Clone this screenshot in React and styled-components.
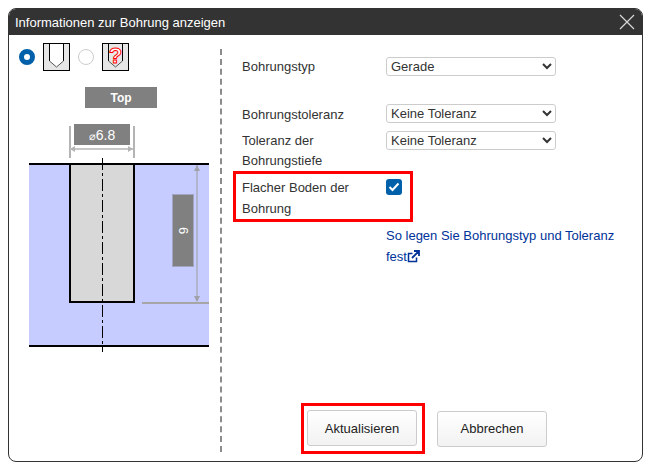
import React from "react";
import styled, { createGlobalStyle } from "styled-components";

const GlobalStyle = createGlobalStyle`
  html, body {
    margin: 0;
    padding: 0;
    background: #fff;
  }
  body {
    font-family: "Liberation Sans", Arial, sans-serif;
    color: #333;
  }
`;

const Page = styled.div`
  width: 652px;
  height: 469px;
  padding: 8px 8px 7px 8px;
  box-sizing: border-box;
`;

const Dialog = styled.div`
  width: 635px;
  height: 454px;
  box-sizing: border-box;
  display: flex;
  flex-direction: column;
  border: 1px solid #333;
  border-radius: 8px;
  overflow: hidden;
  background: #fff;
`;

const TitleBar = styled.div`
  height: 26px;
  flex: none;
  display: flex;
  align-items: center;
  justify-content: space-between;
  padding: 0 7px 0 6px;
  background: #333;
  color: #fff;
  font-size: 13px;
`;

const CloseIcon = styled.svg`
  width: 16px;
  height: 16px;
  display: block;
`;

const Body = styled.div`
  flex: 1;
  display: flex;
  padding: 14px 0 7px 0;
  min-height: 0;
`;

const LeftPane = styled.div`
  width: 213px;
  flex: none;
  box-sizing: border-box;
  margin-bottom: 2px;
  border-right: 2px dashed #8c8c8c;
  display: flex;
  flex-direction: column;
`;

const HoleTypes = styled.div`
  display: flex;
  align-items: center;
  padding-left: 10px;
  margin-top: -6px;
  height: 28px;
`;

const Radio = styled.span`
  width: 16px;
  height: 16px;
  box-sizing: border-box;
  border-radius: 50%;
  background: #fff;
  border: ${(p) => (p.$checked ? "5px solid #0060aa" : "1px solid #ccc")};
  margin-right: 8px;
`;

const TypeIcon = styled.svg`
  width: 27px;
  height: 28px;
  display: block;
  margin-right: 8px;
`;

const Drawing = styled.svg`
  width: 211px;
  height: 320px;
  display: block;
  margin-top: 6px;
`;

const RightPane = styled.div`
  flex: 1;
  display: flex;
  flex-direction: column;
  padding-left: 20px;
  font-size: 13px;
  line-height: 20px;
`;

const FormRow = styled.div`
  display: grid;
  grid-template-columns: 144px 170px;
  margin-top: ${(p) => p.$top || 0}px;
`;

const Label = styled.div`
  padding-top: ${(p) => p.$pad || 0}px;
`;

const Select = styled.select`
  width: 170px;
  height: 19px;
  box-sizing: border-box;
  padding: 0;
  font-family: "Liberation Sans", Arial, sans-serif;
  font-size: 13px;
  color: #333;
  background: #fff;
  border: 1px solid #ccc;
  border-radius: 3px;
`;

const FlatBottomRow = styled.div`
  display: grid;
  grid-template-columns: 144px 170px;
  width: 180px;
  height: 51px;
  box-sizing: border-box;
  margin: 0 0 0 -9px;
  padding: 3px 0 0 6px;
  border: 3px solid #f00;
  line-height: 21px;
`;

const Checkbox = styled.span`
  width: 16px;
  height: 16px;
  margin-top: 2px;
  border-radius: 3px;
  background: #0060aa;
  display: flex;
  align-items: center;
  justify-content: center;
`;

const HelpLink = styled.a`
  display: block;
  width: 240px;
  margin: 3px 0 0 144px;
  color: #003399;
  line-height: 21px;
  text-decoration: none;
  svg {
    vertical-align: -2px;
  }
`;

const Footer = styled.div`
  margin-top: auto;
  display: flex;
  align-items: center;
  padding-left: 59px;
`;

const PrimaryHighlight = styled.div`
  padding: 4px 5px 5px 3px;
  border: 3px solid #f00;
  display: flex;
`;

const Button = styled.button`
  width: 110px;
  height: 36px;
  box-sizing: border-box;
  font-family: "Liberation Sans", Arial, sans-serif;
  font-size: 13px;
  color: #222;
  background: linear-gradient(#fff, #f2f2f2);
  border: 1px solid #ccc;
  border-radius: 3px;
  margin-left: ${(p) => p.$left || 0}px;
`;

const HoleIcon = ({ unknown }) => (
  <TypeIcon viewBox="0 0 27 28">
    <rect x="0.500" y="0.500" width="26" height="27" fill="#e6e6e6" stroke="#000" />
    <path d="M6.500 1v17l7 6 7-6V1z" fill={unknown ? "#e6e6e6" : "#fff"} stroke="none" />
    <path d="M6.500 1v17M20.500 1v17" stroke="#000" strokeWidth="1" fill="none" />
    <path d="M6.500 18l7 6 7-6" stroke="#555" strokeWidth="1" fill="none" />
    {unknown && (
      <text
        x="13.500"
        y="20"
        textAnchor="middle"
        fontFamily="Liberation Sans, Arial, sans-serif"
        fontSize="22"
        fontWeight="700"
        fill="#fff"
        stroke="#f00"
        strokeWidth="1"
      >
        ?
      </text>
    )}
  </TypeIcon>
);

// left pane drawing, origin is at page x=9, y=77
const HoleDrawing = () => (
  <Drawing viewBox="0 0 211 320">
    <rect x="20" y="87" width="180" height="182" fill="#c6ccff" />
    <rect x="76" y="10" width="72" height="21" fill="#808080" />
    <text x="112" y="25" textAnchor="middle" fontSize="12" fontWeight="700" fontFamily="Liberation Sans, Arial, sans-serif" fill="#fff">
      Top
    </text>

    <path d="M61 49v32M125 49v32" stroke="#b4b4b4" strokeWidth="2" />
    <path d="M61 72h63" stroke="#c8c8c8" strokeWidth="2" />
    <path d="M61 72l5-3v6zM124 72l-5-3v6z" fill="#b4b4b4" />
    <rect x="65" y="47" width="56" height="21" fill="#808080" />
    <text x="93" y="63" textAnchor="middle" fontFamily="Liberation Sans, Arial, sans-serif" fill="#fff">
      <tspan fontSize="11">⌀</tspan>
      <tspan fontSize="14">6.8</tspan>
    </text>

    <rect x="61" y="87" width="64" height="138" fill="#d8d8d8" stroke="#000" strokeWidth="2" />
    <path d="M20 87h180M20 269h180" stroke="#000" strokeWidth="2" />
    <path d="M93.500 81v194" stroke="#000" strokeWidth="1" strokeDasharray="12 3 3 3" />

    <path d="M188 88v136" stroke="#b0b4cc" strokeWidth="2" />
    <path d="M188 88l-3 6h6zM188 225l-3-6h6z" fill="#a0a0a8" />
    <path d="M133 226h67" stroke="#a6a6a6" strokeWidth="2" />
    <rect x="163.500" y="117.500" width="21" height="72" fill="#808080" stroke="#a0a4c0" />
    <text
      x="174"
      y="153.500"
      textAnchor="middle"
      fontSize="13"
      fontFamily="Liberation Sans, Arial, sans-serif"
      fill="#fff"
      transform="rotate(90 174 153.500)"
      dy="4"
    >
      6
    </text>
  </Drawing>
);

export default function App() {
  return (
    <Page>
      <GlobalStyle />
      <Dialog>
        <TitleBar>
          <span>Informationen zur Bohrung anzeigen</span>
          <CloseIcon viewBox="0 0 16 16">
            <path d="M1 1l14 14M15 1L1 15" stroke="#d8d8d8" strokeWidth="1.200" />
          </CloseIcon>
        </TitleBar>
        <Body>
          <LeftPane>
            <HoleTypes>
              <Radio $checked />
              <HoleIcon />
              <Radio />
              <HoleIcon unknown />
            </HoleTypes>
            <HoleDrawing />
          </LeftPane>
          <RightPane>
            <FormRow $top={8}>
              <Label>Bohrungstyp</Label>
              <Select defaultValue="Gerade">
                <option>Gerade</option>
              </Select>
            </FormRow>
            <FormRow $top={27}>
              <Label $pad={1}>Bohrungstoleranz</Label>
              <Select defaultValue="Keine Toleranz">
                <option>Keine Toleranz</option>
              </Select>
            </FormRow>
            <FormRow $top={6}>
              <Label>
                Toleranz der
                <br />
                Bohrungstiefe
              </Label>
              <Select defaultValue="Keine Toleranz">
                <option>Keine Toleranz</option>
              </Select>
            </FormRow>
            <FlatBottomRow>
              <Label>
                Flacher Boden der
                <br />
                Bohrung
              </Label>
              <Checkbox>
                <svg width="12" height="10" viewBox="0 0 12 10">
                  <path d="M1.500 5l3 3 6-6.500" stroke="#fff" strokeWidth="2" fill="none" />
                </svg>
              </Checkbox>
            </FlatBottomRow>
            <HelpLink href="#">
              So legen Sie Bohrungstyp und Toleranz fest
              <svg width="13" height="13" viewBox="0 0 13 13">
                <path d="M9.500 7.500V11.500H1.500V3.500H5.500" stroke="#003399" strokeWidth="1.500" fill="none" />
                <path d="M5 8l6-6M7 1h5v5" stroke="#003399" strokeWidth="1.800" fill="none" />
              </svg>
            </HelpLink>
            <Footer>
              <PrimaryHighlight>
                <Button>Aktualisieren</Button>
              </PrimaryHighlight>
              <Button $left={12}>Abbrechen</Button>
            </Footer>
          </RightPane>
        </Body>
      </Dialog>
    </Page>
  );
}
